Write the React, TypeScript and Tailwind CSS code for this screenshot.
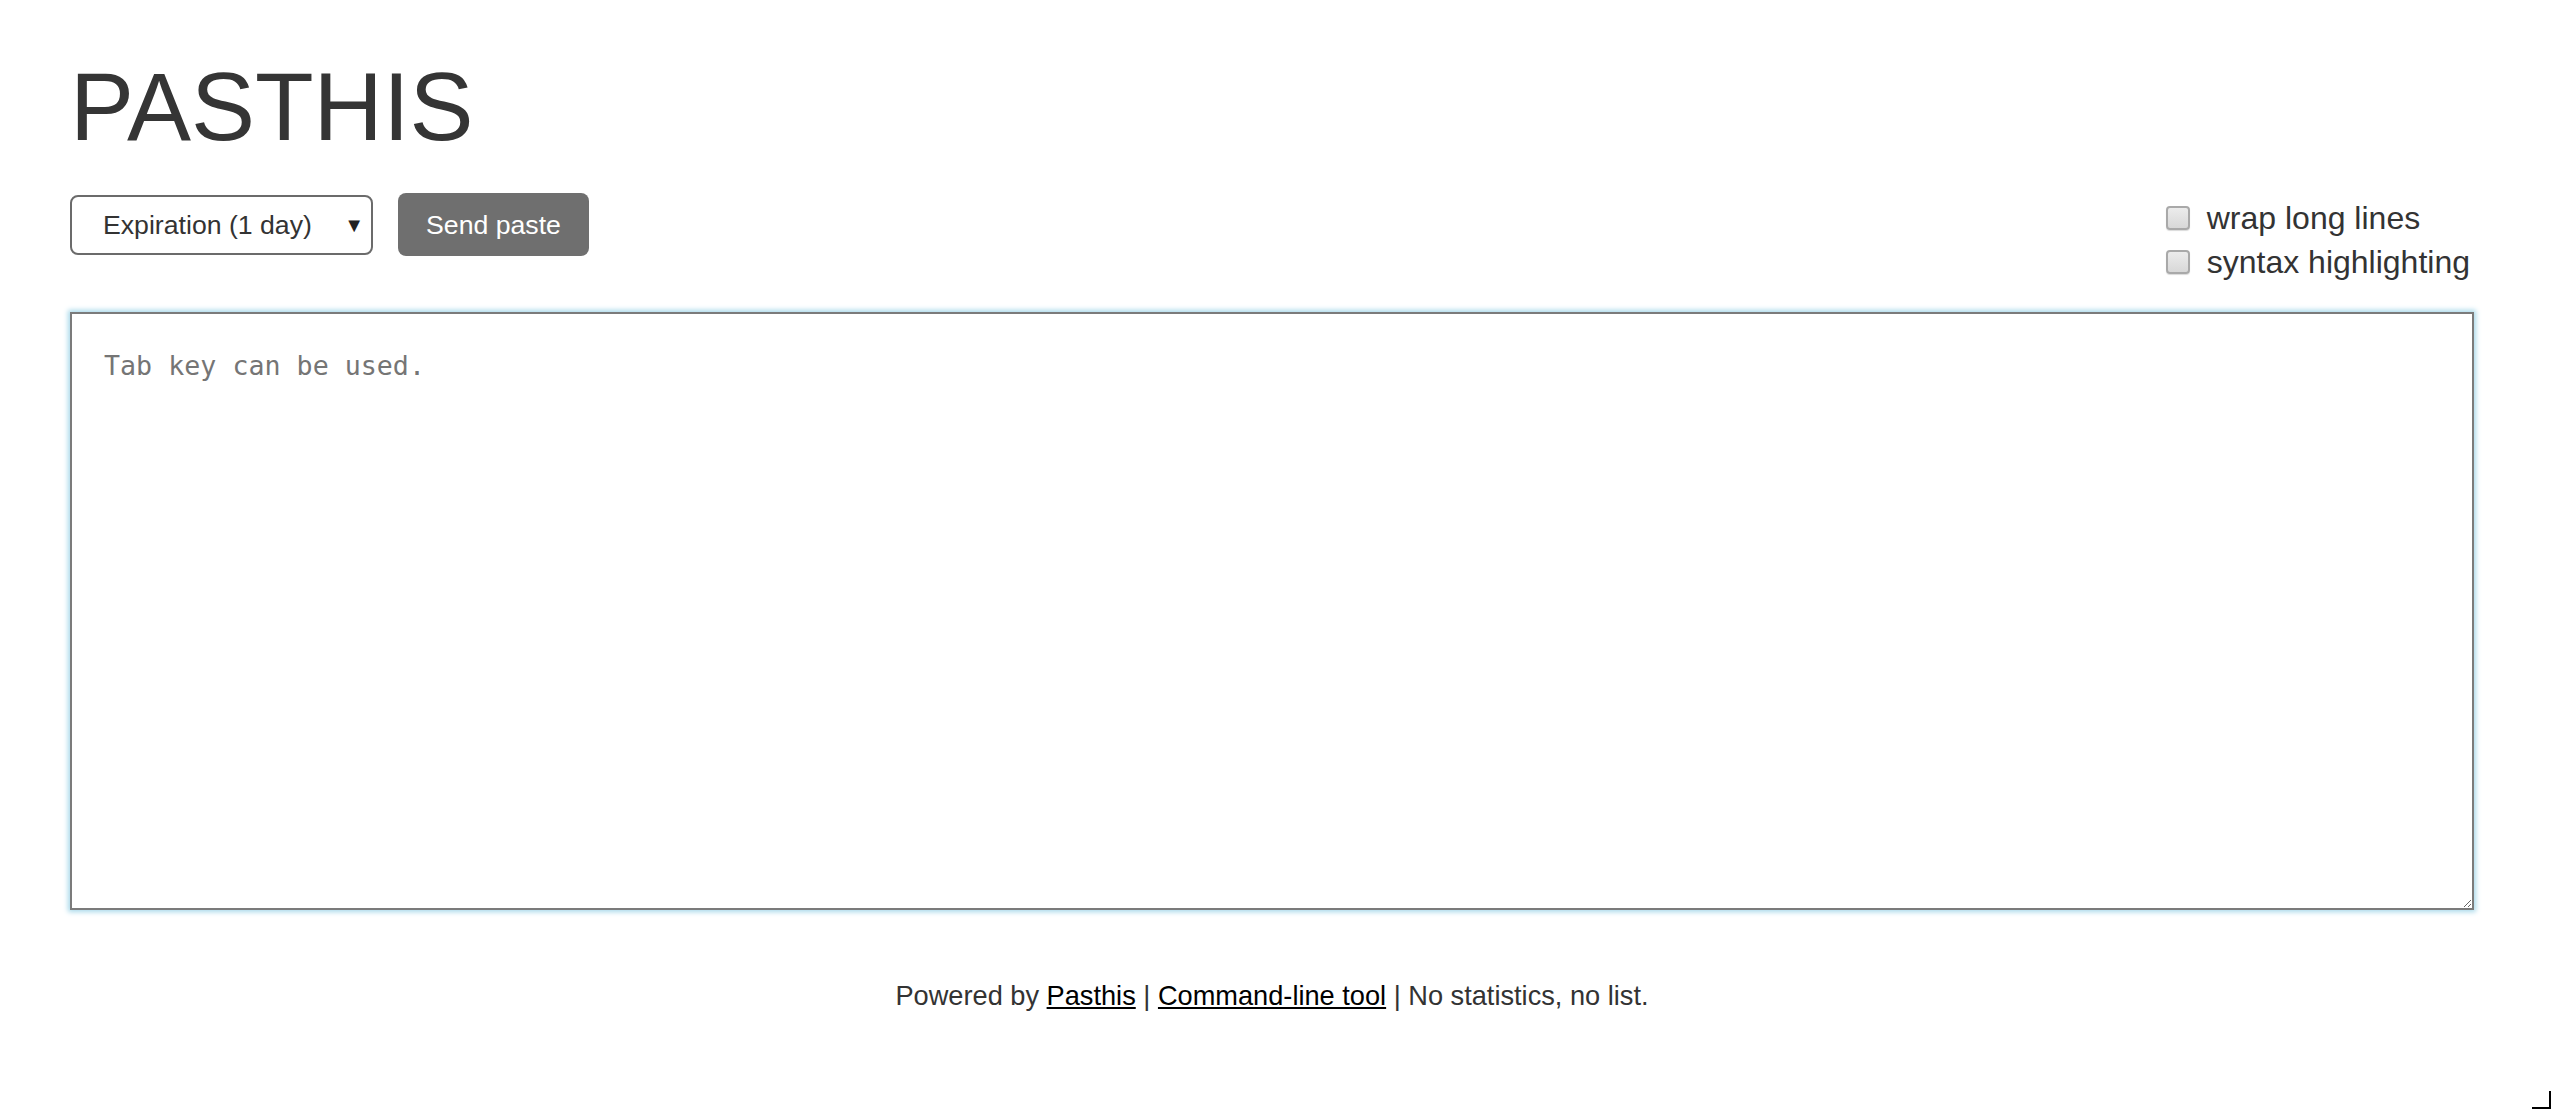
import React from "react";

export default function App() {
  return (
    <div className="min-h-[1110px] w-full bg-white text-[#333333]" style={{ fontFamily: '"Liberation Sans", Arial, sans-serif' }}>
      <div className="pl-[70px] pr-[78px] pt-[59px]">
        <h1 className="m-0 h-[96px] text-[96px] font-normal leading-[96px] text-[#353535]">PASTHIS</h1>

        <div className="mt-[38px] flex items-start justify-between">
          <div className="flex items-center gap-[25px]">
            <div className="flex h-[60px] w-[303px] items-center rounded-[8px] border-2 border-[#6b6b6b] bg-white">
              <select
                defaultValue="1d"
                className="h-full flex-1 appearance-none bg-transparent pl-[31px] text-[26.67px] text-[#333333] outline-none"
                style={{ fontFamily: '"Liberation Sans", Arial, sans-serif' }}
              >
                <option value="1d">Expiration (1 day)</option>
                <option value="1w">Expiration (1 week)</option>
                <option value="1m">Expiration (1 month)</option>
                <option value="never">Never</option>
              </select>
              <span className="pr-[7px] text-[20px] leading-none text-[#222222]">▼</span>
            </div>
            <button
              className="h-[63px] w-[191px] rounded-[8px] bg-[#6f6f6f] text-[26.67px] text-white"
              style={{ fontFamily: '"Liberation Sans", Arial, sans-serif' }}
            >
              Send paste
            </button>
          </div>

          <div className="mr-[4px] mt-[3px] flex flex-col">
            {["wrap long lines", "syntax highlighting"].map((t) => (
              <label key={t} className="flex h-[44px] items-center gap-[17px] text-[32px] leading-none text-[#333333]">
                <span className="block h-[24px] w-[24px] rounded-[4px] border-2 border-[#a9a9a9] bg-gradient-to-b from-[#ececec] to-[#d8d8d8] shadow-[0_1px_1px_rgba(0,0,0,0.15)]" />
                <span>{t}</span>
              </label>
            ))}
          </div>
        </div>

        <textarea
          placeholder="Tab key can be used."
          className="mt-[28px] block h-[598px] w-full border-2 border-[#7b7b7b] bg-white p-[32px] text-[26.67px] text-[#333333] shadow-[0_0_5px_2px_#a9d9ea] outline-none placeholder:text-[#757575]"
          style={{ fontFamily: '"DejaVu Sans Mono", monospace' }}
        />

        <div className="mt-[66px] text-center text-[27.2px] text-[#333333]">
          Powered by <a className="text-black underline" href="#">Pasthis</a> |{" "}
          <a className="text-black underline" href="#">Command-line tool</a> | No statistics, no list.
        </div>
      </div>

      <div className="fixed bottom-[1px] right-[1px] h-[18px] w-[19px] border-b-2 border-r-2 border-black" />
    </div>
  );
}
